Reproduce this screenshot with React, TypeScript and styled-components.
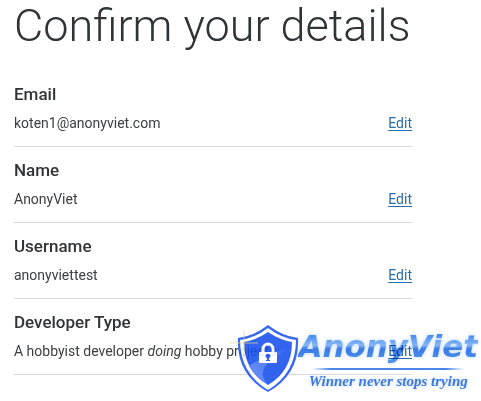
import React from "react";
import styled, { createGlobalStyle } from "styled-components";

const GlobalStyle = createGlobalStyle`
  body {
    margin: 0;
    background: #fff;
    color: #2f3436;
    font-family: Roboto, "Open Sans", sans-serif;
  }
`;

const Page = styled.main`
  position: relative;
  padding: 0 69px 24px 14px;
`;

const Title = styled.h1`
  margin: 0 0 26px;
  font-size: 45px;
  font-weight: 300;
  line-height: 52px;
  white-space: nowrap;
`;

const Details = styled.dl`
  margin: 0;
`;

const Row = styled.div`
  display: grid;
  grid-template-columns: 1fr auto;
  align-items: baseline;
  row-gap: 8px;
  padding: 6px 0 13px;
  border-bottom: 1px solid #d9d9d9;
  margin-bottom: 7px;
`;

const Label = styled.dt`
  grid-column: 1 / -1;
  font-size: 17px;
  font-weight: 500;
  line-height: 21px;
`;

const Value = styled.dd`
  margin: 0;
  color: #3b4042;
  font-size: 14px;
  line-height: 20px;
  white-space: nowrap;
`;

const EditLink = styled.a`
  color: #2b6cab;
  font-size: 14px;
  line-height: 20px;
  text-decoration: underline;
  text-underline-offset: 2px;
`;

const Watermark = styled.div`
  position: absolute;
  right: 3px;
  bottom: 12px;
  display: flex;
  align-items: flex-start;
  pointer-events: none;
`;

const ShieldIcon = styled.svg`
  overflow: visible;
  opacity: 0.88;
`;

const Brand = styled.div`
  display: flex;
  flex-direction: column;
  align-items: center;
  padding-top: 4px;
  mix-blend-mode: multiply;
`;

const BrandName = styled.span`
  background: linear-gradient(#4a8cec 20%, #86b6f6 48%, #3b7be6 58%, #4f90ec 90%);
  background-clip: text;
  -webkit-background-clip: text;
  color: transparent;
  filter: drop-shadow(0 0 2px #b9d7ff);
  font: italic 700 31px/36px "DejaVu Sans", sans-serif;
`;

const Rule = styled.span`
  width: 152px;
  height: 2px;
  margin-top: 4px;
  background: linear-gradient(90deg, transparent, #4b86ea 12%, #4b86ea 88%, transparent);
`;

const Tagline = styled.span`
  color: #3f78e0;
  font: italic 700 15px/22px "Liberation Serif", serif;
  text-shadow: 0 0 4px #b5d6ff;
`;

const details = [
  { label: "Email", value: "koten1@anonyviet.com" },
  { label: "Name", value: "AnonyViet" },
  { label: "Username", value: "anonyviettest" },
  { label: "Developer Type", value: <>A hobbyist developer <em>doing</em> hobby projects</> },
];

function Shield() {
  return (
    <ShieldIcon width="62" height="70" viewBox="0 0 62 70" aria-hidden="true">
      <defs>
        <linearGradient id="shine" x1="1" y1="0" x2="0" y2="1">
          <stop offset="0" stopColor="#1f57f0" />
          <stop offset="1" stopColor="#6088f8" />
        </linearGradient>
      </defs>
      <path d="M32 1Q46 12 62 14Q64 50 32 68Q0 50 2 14Q18 12 32 1Z" fill="#1f55ec" />
      <path d="M32 4Q45 14 60 16Q60 49 32 66Q4 49 4 16Q19 14 32 4Z" fill="#fff" />
      <path d="M32 8Q44 16 56 18Q56 47 32 61Q8 47 8 18Q20 16 32 8Z" fill="#184fee" />
      <path d="M51 25Q33 29 13 42Q19 53 32 61Q22 50 31 40Q40 32 51 25Z" fill="url(#shine)" />
      <path d="M27 29V25a5 5 0 0 1 10 0V29" fill="none" stroke="#fff" strokeWidth="3" />
      <rect x="23" y="28" width="18" height="11" rx="1" fill="#fff" />
      <path d="M32 30a2 2 0 0 1 1 4v2h1v1h-4v-1h1v-2a2 2 0 0 1 1-4Z" fill="#184fee" />
      <path d="M-6 19H22M8 6V34" fill="none" stroke="#d8c985" strokeWidth="1" opacity="0.75" />
    </ShieldIcon>
  );
}

export default function App() {
  return (
    <>
      <GlobalStyle />
      <Page>
        <Title>Confirm your details</Title>
        <Details>
          {details.map(({ label, value }) => (
            <Row key={label}>
              <Label>{label}</Label>
              <Value>{value}</Value>
              <EditLink href="#" aria-label={`Edit ${label}`}>Edit</EditLink>
            </Row>
          ))}
        </Details>
        <Watermark>
          <Shield />
          <Brand>
            <BrandName>AnonyViet</BrandName>
            <Rule />
            <Tagline>Winner never stops trying</Tagline>
          </Brand>
        </Watermark>
      </Page>
    </>
  );
}
